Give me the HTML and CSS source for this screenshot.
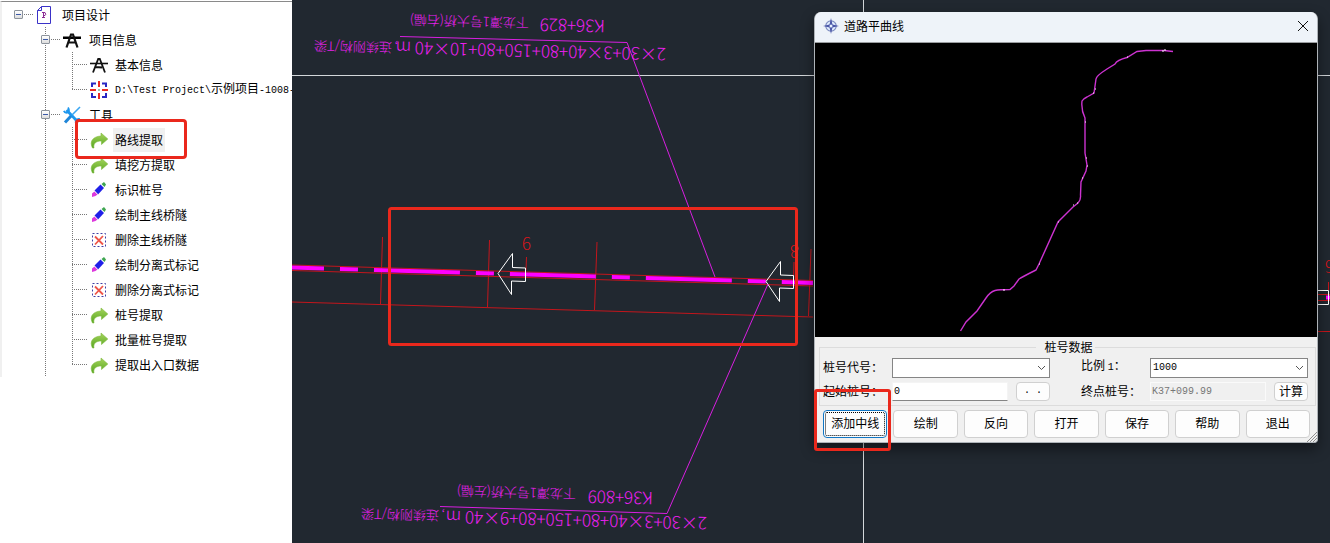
FILE: index.html
```html
<!DOCTYPE html>
<html lang="zh-CN">
<head>
<meta charset="utf-8">
<title>道路平曲线</title>
<link rel="stylesheet" href="styles.css">
</head>
<body>
<svg class="defs" width="0" height="0" aria-hidden="true">
  <defs>
    <linearGradient id="green" x1="0" y1="0" x2="0" y2="1">
      <stop offset="0" stop-color="#a6d45c"/><stop offset="1" stop-color="#55a51f"/>
    </linearGradient>
    <symbol id="i-doc" viewBox="0 0 18 18">
      <path d="M5.500 .5H14.500V17.500H1.500V4.500Z" fill="#fff" stroke="#3a32c8"/>
      <path d="M5.500 .5V4.500H1.500" fill="none" stroke="#3a32c8"/>
      <path d="M6 6.500H9Q10.500 8.500 9 9.500H7.500M7.500 6.500V11.500M6 11.500H9" fill="none" stroke="#8a2a94"/>
    </symbol>
    <symbol id="i-road" viewBox="0 0 18 18">
      <path d="M0 5.500H18V8H0Z"/>
      <path d="M3.500 16.500L8 3.500H10L14.500 16.500M5.500 11.500H12.500" fill="none" stroke="#111" stroke-width="2.200"/>
    </symbol>
    <symbol id="i-info" viewBox="0 0 18 18">
      <path d="M0 7.500H18" stroke="#111" stroke-width="1.600"/>
      <path d="M3 16.500L8.200 3H9.800L15 16.500M5.500 11L12 11.500" fill="none" stroke="#111" stroke-width="1.800"/>
    </symbol>
    <symbol id="i-target" viewBox="0 0 18 18">
      <path d="M2 6V2.500H6M12 2.500H16V6M16 12V16H12M6 16H2V12" fill="none" stroke="#2828c4" stroke-width="2"/>
      <path d="M9 0V6M9 12V18M0 9H6M12 9H18" stroke="#ea2b22" stroke-width="2"/>
      <path d="M8 9H10M9 8V10" stroke="#7a8" stroke-width="1"/>
    </symbol>
    <symbol id="i-tools" viewBox="0 0 18 18">
      <path d="M3.500 4L14 15" stroke="#1d97ee" stroke-width="2.800"/>
      <path d="M.8 4.800Q2 7.500 4.800 6.500Q7 4.500 5 1.500M12.500 16.500Q13 12.500 16.800 13" fill="none" stroke="#1d97ee" stroke-width="1.800"/>
      <path d="M17 1L9 9" stroke="#3aa6f2" stroke-width="1.600"/>
      <path d="M8 10L2 16.500" stroke="#1f86d8" stroke-width="3"/>
    </symbol>
    <symbol id="i-go" viewBox="0 0 18 18">
      <path d="M2.500 17C-1 10.500 3 5.500 11 5V2L17.800 8L11.500 13.500V10C6 10 3 12.500 4 17Z" fill="url(#green)" stroke="#7dbb3c" stroke-width=".6"/>
    </symbol>
    <symbol id="i-pen" viewBox="0 0 18 18">
      <path d="M4.500 9.500L10.500 3.500L14 7L8 13.500Z" fill="#2020e8"/>
      <path d="M11.500 3L14 1L16 3.500L14.500 6Z" fill="#3fa650"/>
      <path d="M4.500 10.500L7.500 13.500L5.500 15L2 16V12.500Z" fill="#dd38dd"/>
      <path d="M3.800 9.500L8.300 14" stroke="#f7d6ee" stroke-width="1"/>
    </symbol>
    <symbol id="i-del" viewBox="0 0 18 18">
      <rect x="2.500" y="2.500" width="13" height="13" fill="#fff" stroke="#4040a4" stroke-dasharray="2 2"/>
      <path d="M5 5.500L13 13.500M13 5L5 13.500" stroke="#ee5548" stroke-width="1.800"/>
    </symbol>
  </defs>
</svg>

<main class="app">
  <nav class="side" aria-label="项目设计">
    <div class="tree">
      <div class="row root"><button class="fold" aria-label="折叠"></button><svg class="icon"><use href="#i-doc"/></svg><span>项目设计</span></div>
      <ul class="level1">
        <li>
          <div class="row"><button class="fold" aria-label="折叠"></button><svg class="icon"><use href="#i-road"/></svg><span>项目信息</span></div>
          <ul class="level2">
            <li class="row"><svg class="icon"><use href="#i-info"/></svg><span>基本信息</span></li>
            <li class="row"><svg class="icon"><use href="#i-target"/></svg><span class="path"><span class="mono">D:\Test Project\</span>示例项目<span class="mono">-1008-</span></span></li>
          </ul>
        </li>
        <li>
          <div class="row"><button class="fold" aria-label="折叠"></button><svg class="icon"><use href="#i-tools"/></svg><span>工具</span></div>
          <ul class="level2">
            <li class="row marked"><svg class="icon"><use href="#i-go"/></svg><span class="selected">路线提取</span></li>
            <li class="row"><svg class="icon"><use href="#i-go"/></svg><span>填挖方提取</span></li>
            <li class="row"><svg class="icon"><use href="#i-pen"/></svg><span>标识桩号</span></li>
            <li class="row"><svg class="icon"><use href="#i-pen"/></svg><span>绘制主线桥隧</span></li>
            <li class="row"><svg class="icon"><use href="#i-del"/></svg><span>删除主线桥隧</span></li>
            <li class="row"><svg class="icon"><use href="#i-pen"/></svg><span>绘制分离式标记</span></li>
            <li class="row"><svg class="icon"><use href="#i-del"/></svg><span>删除分离式标记</span></li>
            <li class="row"><svg class="icon"><use href="#i-go"/></svg><span>桩号提取</span></li>
            <li class="row"><svg class="icon"><use href="#i-go"/></svg><span>批量桩号提取</span></li>
            <li class="row"><svg class="icon"><use href="#i-go"/></svg><span>提取出入口数据</span></li>
          </ul>
        </li>
      </ul>
    </div>
  </nav>

  <section class="cad">
    <svg class="drawing" viewBox="292 0 1038 543" preserveAspectRatio="xMinYMin slice">
      <g class="cross"><path d="M292 75.500H1330M863.500 0V543"/></g>
      <g class="red">
        <path d="M292 265L813 280.500M292 270.500L813 286M292 302L813 317"/>
        <path d="M382.500 237L380.500 304M489.500 240L487.500 307M597 242L594.500 310M811 249L808.500 316"/>
        <path d="M526.500 257L526 270M794 262L793.500 280"/>
        <path d="M1317 294.500H1330M1317 300.500H1330M1317 331.500H1330M1328.500 282V290"/>
      </g>
      <path class="centre" d="M292 267.500L813 283"/>
      <path class="centre solid" d="M1326 297.500H1330"/>
      <g class="number">
        <text transform="translate(531 237) rotate(180)">9</text>
        <text transform="translate(799 245) rotate(180)">8</text>
        <text transform="translate(1334 260) rotate(180)">6</text>
      </g>
      <g class="arrows">
        <path d="M498 273.500L512.500 253.500V267.500L525.500 268V281.500L511.500 281V294.500Z"/>
        <path d="M766 281.500L780.500 261.500V275L793.500 275.500V288.500L779.500 288V301.500Z"/>
        <path d="M1317 290.500H1328.500V304.500H1317"/>
      </g>
      <g class="leader">
        <path d="M400 36.500L627 42.500L715 277M440 506.500L667 513.500L768 284"/>
      </g>
      <g class="note">
        <text transform="translate(605 20) rotate(181.400)">K36+829</text>
        <text class="han" transform="translate(529 18) rotate(181.400)">下龙潭1号大桥(右幅)</text>
        <text transform="translate(666 48) rotate(181.400)">2×30+3×40+80+150+80+10×40 m</text>
        <text class="han" transform="translate(398 43) rotate(181.400)">, 连续刚构/T梁</text>
        <text transform="translate(653 492) rotate(181.400)">K36+809</text>
        <text class="han" transform="translate(576 489) rotate(181.400)">下龙潭1号大桥(左幅)</text>
        <text transform="translate(707 517) rotate(181.400)">2×30+3×40+80+150+80+9×40 m</text>
        <text class="han" transform="translate(445 511) rotate(181.400)">, 连续刚构/T梁</text>
      </g>
      <rect class="callout" x="389.500" y="208.500" width="407" height="136" rx="2"/>
    </svg>

    <form class="dialog" onsubmit="return false">
      <header class="title">
        <svg class="compass" viewBox="0 0 16 16">
          <circle cx="8" cy="8" r="5.200" fill="#e4f0ff" stroke="#7d8cc0" stroke-width="1.200"/>
          <path d="M8 0L9.500 6.500L16 8L9.500 9.500L8 16L6.500 9.500L0 8L6.500 6.500Z" fill="#4b57a8"/>
          <circle cx="8" cy="8" r="1.500" fill="#e8f2ff"/>
        </svg>
        <h1>道路平曲线</h1>
        <button class="close" type="button" aria-label="关闭"><svg viewBox="0 0 12 12"><path d="M1 1L11 11M11 1L1 11"/></svg></button>
      </header>
      <svg class="preview" viewBox="815 43 502 294">
        <path class="curve" d="M960.500 331L966 322L977 311L986 298Q990 292 995 290.500Q999 289.500 1010 289.500L1014 286L1019 279Q1024 276 1036 270L1039 264L1058 222L1073 207L1078 203Q1081 200 1080.500 195L1081 182L1086 171L1087 165L1085 153V118Q1081 110 1082 101Q1083 99 1087 97L1094 93L1096 79Q1096 76 1107 69L1115 64Q1117 60 1127 57.500L1137 51.500L1146 50.500H1164L1173 51.500"/>
        <path class="nodes" d="M1162 51h2M1164 50h2M1127 57h1M1095 89h1M1093 93h1M1085 122h1M1086 158h1M1087 166h1M1082 178h1M1077 203h1M1073 205h1M1058 222h1M1039 264h1M1003 290h2"/>
      </svg>
      <div class="panel">
        <fieldset>
          <legend>桩号数据</legend>
          <div class="fields">
            <label for="code">桩号代号：</label>
            <span class="combo"><select id="code"><option></option></select><svg viewBox="0 0 9 6"><path d="M1 1L4.500 4.500L8 1"/></svg></span>
            <label class="second" for="scale">比例 <span class="mono">1</span>：</label>
            <span class="combo"><select id="scale"><option>1000</option></select><svg viewBox="0 0 9 6"><path d="M1 1L4.500 4.500L8 1"/></svg></span>
            <label for="from">起始桩号：</label>
            <input id="from" value="0">
            <button class="small mono" type="button">. .</button>
            <label class="second" for="to">终点桩号：</label>
            <input id="to" value="K37+099.99" disabled>
            <button class="small" type="button">计算</button>
          </div>
        </fieldset>
        <div class="actions">
          <span class="wrap"><button class="current" type="button">添加中线</button></span>
          <button type="button">绘制</button>
          <button type="button">反向</button>
          <button type="button">打开</button>
          <button type="button">保存</button>
          <button type="button">帮助</button>
          <button type="button">退出</button>
        </div>
        <svg class="grip" viewBox="0 0 10 10"><path d="M0 10L10 0M3 10L10 3M6 10L10 6"/></svg>
      </div>
    </form>
  </section>
</main>
</body>
</html>
```
FILE: styles.css
```css
*, *::after { box-sizing: border-box; }
body {
  margin: 0;
  font: 12px/16px "Noto Sans CJK SC", sans-serif;
  color: #000;
  background: #fff;
}
button, input, select { font: inherit; color: inherit; margin: 0; padding: 0; }
ul { list-style: none; margin: 0; padding: 0; }
.defs { position: absolute; }
.mono { font-family: "Liberation Mono", "Noto Sans CJK SC", monospace; font-size: 10px; }

.app { display: grid; grid-template-columns: 292px 1fr; height: 100vh; min-height: 480px; overflow: hidden; }

/* project tree */
.side { background: #fff; }
.tree {
  border-top: 1px solid #8a8a8a;
  border-left: 2px solid #f0f0f0;
  margin-top: 1px;
}
.row {
  position: relative;
  display: flex;
  align-items: center;
  height: 25px;
  padding-left: 61px;
  white-space: nowrap;
  background: repeating-linear-gradient(to right, #777 0 1px, transparent 1px 2px) no-repeat 49px 12px / 10px 1px;
}
.row.root { padding-left: 34px; background-position: 22px 12px; }
.row .icon { width: 18px; height: 18px; flex: none; margin-right: 8px; }
.fold {
  position: relative;
  width: 9px;
  height: 9px;
  flex: none;
  margin: 0 13px 0 -22px;
  border: 1px solid #8c939c;
  border-radius: 1px;
  background: linear-gradient(#3c5aa8, #3c5aa8) no-repeat center / 5px 1px, linear-gradient(#fff, #ddd);
}
.level1 { background: repeating-linear-gradient(to bottom, #777 0 1px, transparent 1px 2px) no-repeat 43px 0 / 1px 100%; }
.level2 { background: repeating-linear-gradient(to bottom, #777 0 1px, transparent 1px 2px) no-repeat 70px 0 / 1px calc(100% - 12px); }
.level2 .row { padding-left: 88px; background-position: 70px 12px; background-size: 15px 1px; }
.level2 .row > span { margin-left: -1px; }
.level2 .row > .selected { background: #f0f0f0; padding: 4px 2px; margin: 0 -3px; }
.marked::after {
  content: "";
  position: absolute;
  z-index: 1;
  left: 73px;
  top: -8px;
  width: 112px;
  height: 40px;
  border: 3px solid #ea281c;
  border-radius: 4px;
}

/* drawing area */
.cad { position: relative; overflow: hidden; background: #212830; }
.drawing { display: block; width: 100%; height: 100%; }
.drawing path { fill: none; }
.cross path { stroke: #d3d7da; }
.red path { stroke: #c3161c; }
.centre { stroke: #f0f; stroke-width: 4; stroke-dasharray: 86 16 18 16; stroke-dashoffset: 54; }
.centre.solid { stroke-dasharray: none; }
.number { font-family: "Noto Sans CJK SC", sans-serif; font-size: 17px; font-weight: 300; fill: #d8161c; }
.arrows path { stroke: #fff; }
.leader path { stroke: #d81fe0; }
.note { font-family: "Noto Sans CJK SC", sans-serif; font-size: 17px; font-weight: 300; fill: #f01ff4; }
.note .han { font-size: 13px; }
.callout { fill: none; stroke: #ea281c; stroke-width: 3; }

/* dialog */
.dialog {
  position: absolute;
  left: 522px;
  top: 12px;
  width: 504px;
  border: 1px solid #aeb3b8;
  border-top: 0;
  border-radius: 7px 7px 4px 4px;
  background: #f0f0f0;
  box-shadow: 0 6px 14px rgb(0 0 0 / 45%);
}
.title {
  display: flex;
  align-items: center;
  height: 31px;
  padding: 0 8px 2px;
  border-bottom: 1px solid #9a9da0;
  border-radius: 7px 7px 0 0;
  background: #eef3f9;
}
.compass { width: 16px; height: 16px; flex: none; margin-right: 5px; }
.title h1 { margin: 0; font-size: 12px; font-weight: 400; flex: 1; }
.close { display: grid; border: 0; background: none; }
.close svg { width: 12px; height: 12px; }
.close path { stroke: #111; fill: none; }
.preview { display: block; width: 100%; background: #000; }
.curve { fill: none; stroke: #cc32d0; stroke-width: 1.4; }
.nodes { stroke: #fff; }

.panel { position: relative; padding: 4px 7px 4px 8px; }
fieldset { margin: 0 -6px 0 -4px; padding: 4px 7px 4px 3px; border: 1px solid #dcdcdc; }
legend { margin: 0 auto; padding: 0 2px 0 8px; line-height: 12px; }
.fields {
  display: grid;
  grid-template-columns: 69px 1fr 34px 100px 1fr 34px;
  column-gap: 0;
  row-gap: 4px;
  align-items: center;
}
.fields label { line-height: 16px; padding-bottom: 2px; white-space: nowrap; }
.fields .second { padding-left: 31px; }
.combo { grid-column: span 2; display: grid; align-items: center; }
.combo > * { grid-area: 1 / 1; }
.combo select {
  appearance: none;
  height: 20px;
  width: 100%;
  padding: 0 2px;
  border: 1px solid #858585;
  border-radius: 0;
  background: #fff;
  font: 10px/16px "Liberation Mono", monospace;
}
.combo svg { justify-self: end; width: 9px; height: 6px; margin-right: 4px; pointer-events: none; }
.combo path { fill: none; stroke: #555; }
.fields input {
  width: calc(100% - 8px);
  height: 19px;
  padding: 0 1px;
  border: 1px solid #f4f4f4;
  border-bottom-color: #858585;
  background: #fff;
  font: 10px/16px "Liberation Mono", monospace;
}
.fields input:disabled { border-color: #fafafa; background: #f0f0f0; color: #777; }
.panel button { padding-bottom: 2px; border: 1px solid #d0d0d0; border-radius: 4px; background: #fdfdfd; }
.panel .small { height: 19px; line-height: 16px; }
.actions { display: grid; grid-template-columns: repeat(7, 1fr); gap: 6px; margin-top: 4px; }
.actions button { height: 28px; width: 100%; }
.wrap { position: relative; display: grid; }
.wrap::after {
  content: "";
  position: absolute;
  inset: -21px -4px -13px -9px;
  border: 3px solid #ea281c;
  border-radius: 3px;
  pointer-events: none;
}
.actions .current { border-color: #1176c4; outline: 1px dotted #000; outline-offset: -3px; }
.grip { position: absolute; right: 0; bottom: 0; width: 10px; height: 10px; }
.grip path { stroke: #8f8f8f; }
```
